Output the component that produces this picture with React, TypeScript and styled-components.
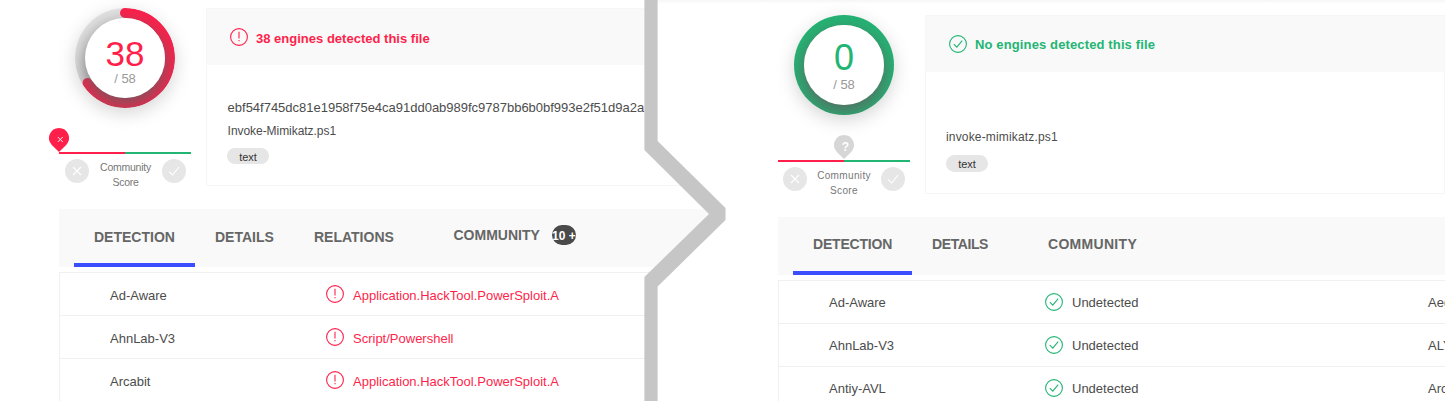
import React from "react";
import styled, { createGlobalStyle } from "styled-components";

const RED = "#ff1f4b";
const GREEN = "#23b574";

const Global = createGlobalStyle`
  *, *::before, *::after { box-sizing: border-box; }
  html, body { margin: 0; background: #fff; }
  body { font-family: "Liberation Sans", Arial, Helvetica, sans-serif; overflow: hidden; }
`;

const Page = styled.main`
  position: relative;
  display: grid;
  grid-template-columns: 657px 788px;
  width: 1445px;
  height: 401px;
  overflow: hidden;
`;

const Report = styled.section<{ $side: "left" | "right" }>`
  display: flex;
  flex-direction: column;
  height: 401px;
  overflow: hidden;
  ${({ $side }) =>
    $side === "left"
      ? `width: 725px; padding: 8px 0 0 59px; z-index: 1;
         clip-path: polygon(0 0, 645px 0, 645px 150px, 709px 214px, 645px 277px, 645px 401px, 0 401px);`
      : `width: 788px; padding: 15px 0 0 121px;
         background: linear-gradient(#f6f6f6, #fff 4px);`}
`;

const Summary = styled.div<{ $height: number }>`
  display: flex;
  gap: 15px;
  height: ${(p) => p.$height}px;
  flex: none;
`;

const ScoreColumn = styled.div`
  display: flex;
  flex-direction: column;
  align-items: center;
  width: 132px;
  flex: none;
`;

const Ring = styled.div`
  display: grid;
  place-items: center;
  width: 100px;
  height: 100px;
  border-radius: 50%;
  overflow: hidden;
  box-shadow: 0 5px 18px rgba(0, 0, 0, 0.17);
  > * { grid-area: 1 / 1; }
`;

const RingFace = styled.div<{ $clean: boolean }>`
  display: flex;
  flex-direction: column;
  align-items: center;
  width: 80px;
  height: 80px;
  padding-top: ${(p) => (p.$clean ? 14 : 17)}px;
  border-radius: 50%;
  background: #fff;
  box-shadow: 0 7px 20px rgba(95, 95, 95, 0.95);
  z-index: 1;
`;

const Hits = styled.div<{ $clean: boolean }>`
  color: ${(p) => (p.$clean ? GREEN : RED)};
  font-size: ${(p) => (p.$clean ? 36 : 35)}px;
  line-height: 38px;
`;

const Total = styled.div<{ $clean: boolean }>`
  color: #999;
  font-size: 13px;
  line-height: 15px;
  margin-top: ${(p) => (p.$clean ? 0 : -2)}px;
`;

const Gauge = styled.div<{ $gap: number }>`
  position: relative;
  width: 132px;
  height: 2px;
  flex: none;
  margin-top: ${(p) => p.$gap}px;
  background: linear-gradient(to right, ${RED} 50%, ${GREEN} 50%);
`;

const Pin = styled.svg<{ $at: number; $rise: number }>`
  position: absolute;
  left: ${(p) => p.$at}px;
  bottom: ${(p) => p.$rise}px;
  margin-left: -10px;
`;

const Votes = styled.div<{ $inset: number }>`
  display: flex;
  width: 132px;
  padding: 5px 5px 0 ${(p) => p.$inset}px;
  justify-content: space-between;
`;

const VoteIcon = styled.svg`
  width: 24px;
  height: 24px;
  flex: none;
`;

const VoteLabel = styled.div<{ $wide: boolean }>`
  color: #777;
  font-size: ${(p) => (p.$wide ? 10 : 10.5)}px;
  line-height: 15px;
  letter-spacing: ${(p) => (p.$wide ? 0.35 : -0.25)}px;
  text-align: center;
  padding-top: 1px;
`;

const Card = styled.div<{ $height: number }>`
  display: flex;
  flex-direction: column;
  flex: 1;
  height: ${(p) => p.$height}px;
  border: 1px solid #f6f6f6;
`;

const Verdict = styled.div<{ $color: string; $spacing: number; $drop?: number }>`
  display: flex;
  align-items: center;
  gap: 8px;
  height: 56px;
  padding: ${(p) => p.$drop ?? 0}px 0 0 23px;
  background: #f9f9f9;
  color: ${(p) => p.$color};
  font-size: 13px;
  font-weight: 700;
  letter-spacing: ${(p) => p.$spacing}px;
`;

const FileInfo = styled.div`
  display: flex;
  flex-direction: column;
  align-items: flex-start;
  padding: 31px 0 0 20px;
`;

const FileLine = styled.div<{ $spacing: number; $size?: number; $indent?: number; $leading?: number }>`
  height: 23px;
  line-height: ${(p) => p.$leading ?? 24}px;
  padding-left: ${(p) => p.$indent ?? 0}px;
  color: #4c4c4c;
  font-size: ${(p) => p.$size ?? 12}px;
  letter-spacing: ${(p) => p.$spacing}px;
  white-space: nowrap;
`;

const Tag = styled.div<{ $height: number }>`
  width: 42px;
  height: ${(p) => p.$height}px;
  line-height: 18px;
  margin-top: 6px;
  border-radius: 9px;
  background: #e6e6e6;
  color: #333;
  font-size: 11px;
  text-align: center;
`;

const Tabs = styled.nav`
  display: flex;
  height: 58px;
  flex: none;
  padding-left: 15px;
  background: #f9f9f9;
`;

const Tab = styled.div<{
  $width: number;
  $active?: boolean;
  $indent?: number;
  $drop?: number;
  $lift?: number;
  $spacing?: number;
}>`
  display: flex;
  width: ${(p) => p.$width}px;
  height: 58px;
  padding: ${(p) => p.$drop ?? 0}px 0 ${(p) => p.$lift ?? 0}px ${(p) => p.$indent ?? 20}px;
  align-items: center;
  gap: 12px;
  flex: none;
  border-bottom: 4px solid ${(p) => (p.$active ? "#3b4eff" : "transparent")};
  color: #666;
  font-size: 14px;
  font-weight: 700;
  letter-spacing: ${(p) => p.$spacing ?? 0}px;
  white-space: nowrap;
`;

const Count = styled.span`
  display: flex;
  align-items: center;
  justify-content: center;
  width: 24px;
  height: 20px;
  padding-top: 1px;
  border-radius: 10px;
  overflow: hidden;
  background: #4a4a4a;
  color: #fff;
  font-size: 12px;
`;

const Results = styled.div`
  margin-top: 5px;
  border-top: 1px solid #f0f0f0;
  border-left: 1px solid #f0f0f0;
`;

const Row = styled.div<{ $drop: number }>`
  display: flex;
  align-items: center;
  height: 43px;
  padding: ${(p) => p.$drop}px 0 0 50px;
  border-bottom: 1px solid #f0f0f0;
  color: #4c4c4c;
  font-size: 13px;
  white-space: nowrap;
`;

const Engine = styled.div`
  width: 216px;
  flex: none;
`;

const Result = styled.div<{ $color: string }>`
  display: flex;
  align-items: center;
  gap: 9px;
  width: 383px;
  flex: none;
  color: ${(p) => p.$color};
`;

const StatusSvg = styled.svg<{ $raise?: number }>`
  width: 18px;
  height: 18px;
  flex: none;
  margin-bottom: ${(p) => p.$raise ?? 0}px;
`;

const Divider = styled.svg`
  position: absolute;
  left: 0;
  top: 0;
  z-index: 2;
  pointer-events: none;
`;

function AlertIcon({ raise = 0 }: { raise?: number }) {
  return (
    <StatusSvg viewBox="0 0 18 18" fill="none" stroke={RED} $raise={raise}>
      <circle cx="9" cy="9" r="8.4" strokeWidth="1.1" />
      <path d="M9 3.8v6.6M9 12v1.3" strokeWidth="1.1" />
    </StatusSvg>
  );
}

function OkIcon({ raise = 0 }: { raise?: number }) {
  return (
    <StatusSvg viewBox="0 0 18 18" fill="none" stroke={GREEN} $raise={raise}>
      <circle cx="9" cy="9" r="8.4" strokeWidth="1.1" />
      <path d="M4.8 9.2 7.8 12.2 13.2 5.7" strokeWidth="1.1" />
    </StatusSvg>
  );
}

function ScoreRing({ hits, total }: { hits: number; total: number }) {
  const length = 2 * Math.PI * 45;
  const clean = hits === 0;
  return (
    <Ring>
      <svg width="100" height="100" viewBox="0 0 100 100" fill="none" strokeWidth="10">
        <circle cx="50" cy="50" r="45.5" strokeWidth="11" stroke={clean ? GREEN : "#e4e4e4"} />
        {!clean && (
          <circle
            cx="50"
            cy="50"
            r="45"
            stroke={RED}
            strokeLinecap="round"
            strokeDasharray={`${(length * hits) / total} ${length}`}
            transform="rotate(-90 50 50)"
          />
        )}
      </svg>
      <RingFace $clean={clean}>
        <Hits $clean={clean}>{hits}</Hits>
        <Total $clean={clean}>/ {total}</Total>
      </RingFace>
    </Ring>
  );
}

function Community({ bad, gap }: { bad: boolean; gap: number }) {
  return (
    <>
      <Gauge $gap={gap}>
        <Pin $at={bad ? 0 : 66} $rise={bad ? 2 : 3} width="20" height="24" viewBox="0 0 20 24">
          <path d="M10 0a10 10 0 0 0-7.2 16.9L10 24l7.2-7.1A10 10 0 0 0 10 0Z" fill={bad ? RED : "#d6d6d6"} />
          {bad ? (
            <path d="M8.8 9l5 5M13.8 9l-5 5" stroke="#fff" strokeWidth="0.9" />
          ) : (
            <text x="11.3" y="15.5" textAnchor="middle" fill="#fff" fontSize="12" fontWeight="700">?</text>
          )}
        </Pin>
      </Gauge>
      <Votes $inset={bad ? 6 : 5}>
        <VoteIcon viewBox="0 0 24 24">
          <circle cx="12" cy="12" r="12" fill="#e6e6e6" />
          <path d="M8 8l8 8M16 8l-8 8" stroke="#fff" strokeWidth="1.1" />
        </VoteIcon>
        <VoteLabel $wide={!bad}>
          Community
          <br />
          Score
        </VoteLabel>
        <VoteIcon viewBox="0 0 24 24">
          <circle cx="12" cy="12" r="12" fill="#e6e6e6" />
          <path d="M7.2 12.6l3.4 3.4 6.4-8" stroke="#fff" strokeWidth="1.1" fill="none" />
        </VoteIcon>
      </Votes>
    </>
  );
}

const infected = [
  ["Ad-Aware", "Application.HackTool.PowerSploit.A"],
  ["AhnLab-V3", "Script/Powershell"],
  ["Arcabit", "Application.HackTool.PowerSploit.A"],
];

const clean = [
  ["Ad-Aware", "AegisLab"],
  ["AhnLab-V3", "ALYac"],
  ["Antiy-AVL", "Arcabit"],
];

export default function App() {
  return (
    <Page>
      <Global />
      <Report $side="left">
        <Summary $height={201}>
          <ScoreColumn>
            <ScoreRing hits={38} total={58} />
            <Community bad gap={44} />
          </ScoreColumn>
          <Card $height={178}>
            <Verdict $color={RED} $spacing={0.01} $drop={2}>
              <AlertIcon raise={3} />
              38 engines detected this file
            </Verdict>
            <FileInfo>
              <FileLine $spacing={-0.01} $size={13} $indent={0.6}>
                ebf54f745dc81e1958f75e4ca91dd0ab989fc9787bb6b0bf993e2f51d9a2a
              </FileLine>
              <FileLine $spacing={-0.05} $indent={0.6}>Invoke-Mimikatz.ps1</FileLine>
              <Tag $height={16}>text</Tag>
            </FileInfo>
          </Card>
        </Summary>
        <Tabs>
          <Tab $width={121} $drop={2} $active>DETECTION</Tab>
          <Tab $width={99} $drop={2}>DETAILS</Tab>
          <Tab $width={120} $drop={2}>RELATIONS</Tab>
          <Tab $width={182} $indent={39.5} $lift={2}>
            COMMUNITY
            <Count>10 +</Count>
          </Tab>
        </Tabs>
        <Results>
          {infected.map(([engine, verdict]) => (
            <Row key={engine} $drop={3}>
              <Engine>{engine}</Engine>
              <Result $color={RED}>
                <AlertIcon raise={3} />
                {verdict}
              </Result>
            </Row>
          ))}
        </Results>
      </Report>
      <Report $side="right">
        <Summary $height={202}>
          <ScoreColumn>
            <ScoreRing hits={0} total={58} />
            <Community bad={false} gap={45} />
          </ScoreColumn>
          <Card $height={179}>
            <Verdict $color={GREEN} $spacing={0.13}>
              <OkIcon />
              No engines detected this file
            </Verdict>
            <FileInfo>
              <FileLine $spacing={0} />
              <FileLine $spacing={0.16} $leading={22}>invoke-mimikatz.ps1</FileLine>
              <Tag $height={17}>text</Tag>
            </FileInfo>
          </Card>
        </Summary>
        <Tabs>
          <Tab $width={119} $active $spacing={-0.2}>DETECTION</Tab>
          <Tab $width={96} $spacing={-0.4}>DETAILS</Tab>
          <Tab $width={169} $indent={40} $spacing={0.3}>COMMUNITY</Tab>
        </Tabs>
        <Results>
          {clean.map(([engine, next]) => (
            <Row key={engine} $drop={1}>
              <Engine>{engine}</Engine>
              <Result $color="#4c4c4c">
                <OkIcon raise={1} />
                Undetected
              </Result>
              <Engine>{next}</Engine>
            </Row>
          ))}
        </Results>
      </Report>
      <Divider width="726" height="401" viewBox="0 0 726 401">
        <path
          d="M644.4 0H657.6V141L725.5 208V220L657.6 286.5V401H644.4V277L709 214 644.4 150Z"
          fill="#c6c6c6"
        />
      </Divider>
    </Page>
  );
}
